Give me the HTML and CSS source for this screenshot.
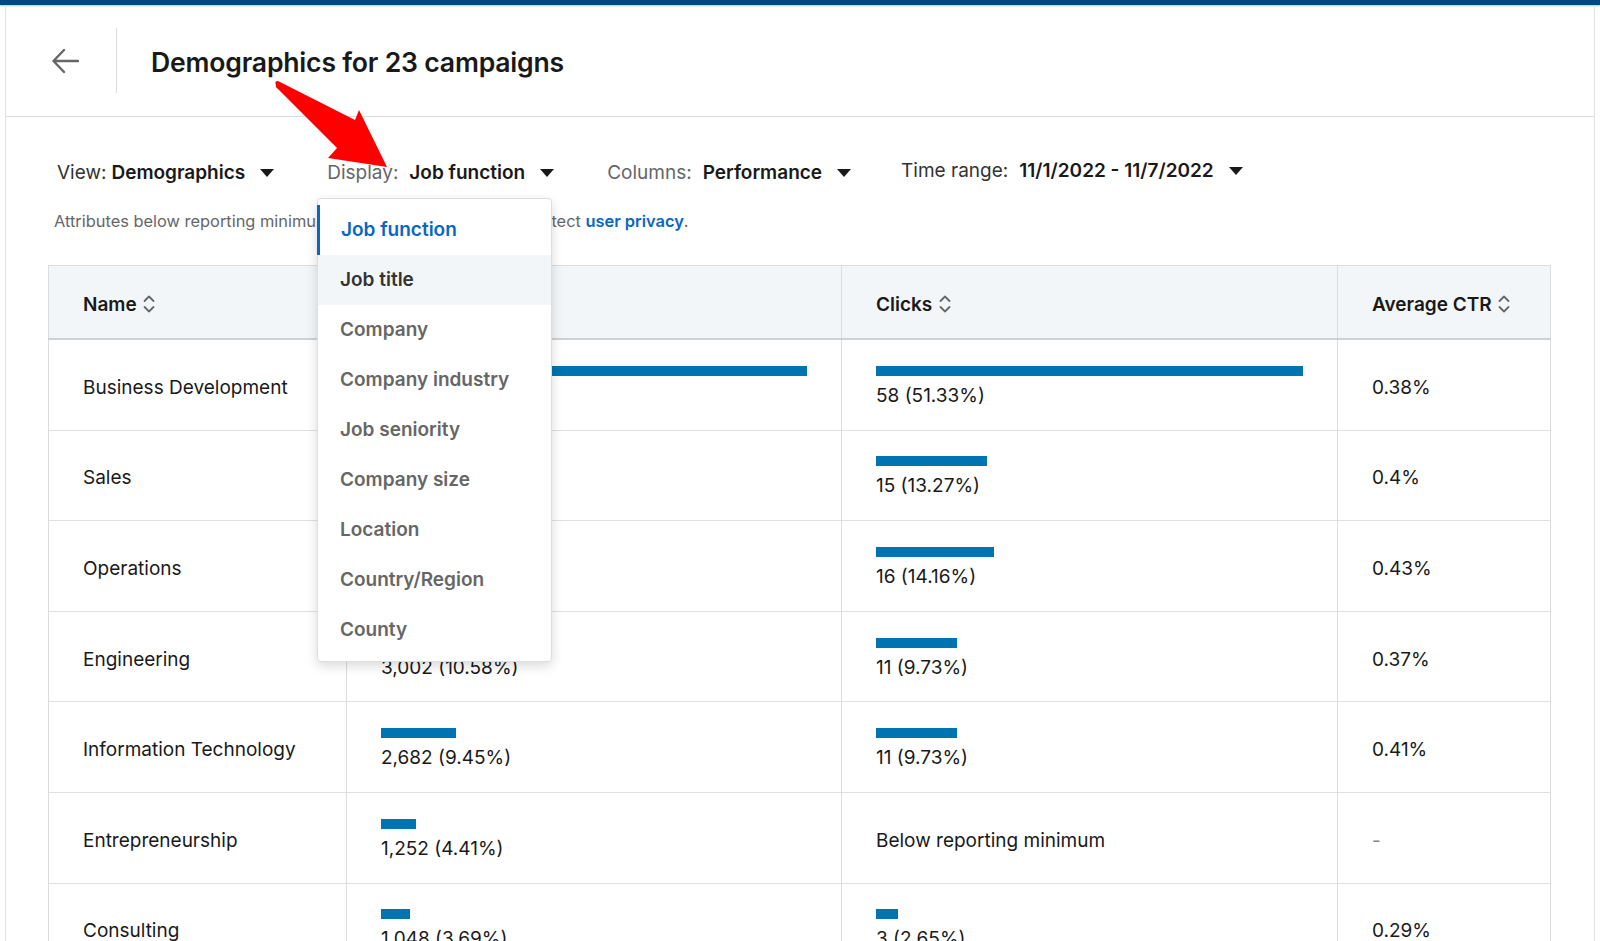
FILE: index.html
```html
<!DOCTYPE html>
<html lang="en">
<head>
  <meta charset="UTF-8">
  <meta name="viewport" content="width=device-width, initial-scale=1.0">
  <title>Demographics for 23 campaigns</title>
  <link rel="stylesheet" href="styles.css">
</head>
<body>
  <div class="topbar"></div>
  <div class="page">
    <!-- Header -->
    <header class="page-header">
      <button class="back-btn" aria-label="Back">
        <svg width="28" height="26" viewBox="0 0 28 26"><path d="M27 13 H3 M13 2 L2.5 13 L13 24" fill="none" stroke="#666" stroke-width="2.4" stroke-linecap="round" stroke-linejoin="round"/></svg>
      </button>
      <span class="divider"></span>
      <h1>Demographics for 23 campaigns</h1>
    </header>

    <!-- Filters -->
    <div class="controls">
      <div class="control"><span class="label dark">View:</span><span class="value">Demographics</span><span class="caret"></span></div>
      <div class="control"><span class="label">Display:</span><span class="value">Job function</span><span class="caret"></span></div>
      <div class="control"><span class="label">Columns:</span><span class="value">Performance</span><span class="caret"></span></div>
      <div class="control up"><span class="label dark">Time range:</span><span class="value">11/1/2022 - 11/7/2022</span><span class="caret"></span></div>
    </div>
    <p class="note">Attributes below reporting minimums will not be displayed to protect <a href="#">user privacy</a>.</p>

    <!-- Table -->
    <table class="demo-table">
      <colgroup>
        <col style="width: 298px">
        <col style="width: 495px">
        <col style="width: 496px">
        <col style="width: 213px">
      </colgroup>
      <thead>
        <tr>
          <th>Name <span class="sort"><svg width="14" height="20" viewBox="0 0 14 20"><path d="M2.5 7 L7 2.5 L11.5 7 M2.5 13 L7 17.5 L11.5 13" fill="none" stroke="#666" stroke-width="1.8" stroke-linecap="round" stroke-linejoin="round"/></svg></span></th>
          <th>Impressions <span class="sort"><svg width="14" height="20" viewBox="0 0 14 20"><path d="M2.5 7 L7 2.5 L11.5 7 M2.5 13 L7 17.5 L11.5 13" fill="none" stroke="#666" stroke-width="1.8" stroke-linecap="round" stroke-linejoin="round"/></svg></span></th>
          <th>Clicks <span class="sort"><svg width="14" height="20" viewBox="0 0 14 20"><path d="M2.5 7 L7 2.5 L11.5 7 M2.5 13 L7 17.5 L11.5 13" fill="none" stroke="#666" stroke-width="1.8" stroke-linecap="round" stroke-linejoin="round"/></svg></span></th>
          <th>Average CTR <span class="sort"><svg width="14" height="20" viewBox="0 0 14 20"><path d="M2.5 7 L7 2.5 L11.5 7 M2.5 13 L7 17.5 L11.5 13" fill="none" stroke="#666" stroke-width="1.8" stroke-linecap="round" stroke-linejoin="round"/></svg></span></th>
        </tr>
      </thead>
      <tbody>
        <tr>
          <td>Business Development</td>
          <td><div class="bar" style="width: 100%"></div><div class="num">15,263 (53.78%)</div></td>
          <td><div class="bar" style="width: 100%"></div><div class="num">58 (51.33%)</div></td>
          <td>0.38%</td>
        </tr>
        <tr>
          <td>Sales</td>
          <td><div class="bar" style="width: 24.6%"></div><div class="num">3,750 (13.21%)</div></td>
          <td><div class="bar" style="width: 25.9%"></div><div class="num">15 (13.27%)</div></td>
          <td>0.4%</td>
        </tr>
        <tr>
          <td>Operations</td>
          <td><div class="bar" style="width: 24.4%"></div><div class="num">3,721 (13.11%)</div></td>
          <td><div class="bar" style="width: 27.6%"></div><div class="num">16 (14.16%)</div></td>
          <td>0.43%</td>
        </tr>
        <tr>
          <td>Engineering</td>
          <td><div class="bar" style="width: 19.7%"></div><div class="num">3,002 (10.58%)</div></td>
          <td><div class="bar" style="width: 19%"></div><div class="num">11 (9.73%)</div></td>
          <td>0.37%</td>
        </tr>
        <tr>
          <td>Information Technology</td>
          <td><div class="bar" style="width: 17.6%"></div><div class="num">2,682 (9.45%)</div></td>
          <td><div class="bar" style="width: 19%"></div><div class="num">11 (9.73%)</div></td>
          <td>0.41%</td>
        </tr>
        <tr>
          <td>Entrepreneurship</td>
          <td><div class="bar" style="width: 8.2%"></div><div class="num">1,252 (4.41%)</div></td>
          <td>Below reporting minimum</td>
          <td class="muted">-</td>
        </tr>
        <tr>
          <td>Consulting</td>
          <td><div class="bar" style="width: 6.9%"></div><div class="num">1,048 (3.69%)</div></td>
          <td><div class="bar" style="width: 5.2%"></div><div class="num">3 (2.65%)</div></td>
          <td>0.29%</td>
        </tr>
      </tbody>
    </table>

    <!-- Open "Display" menu -->
    <ul class="dropdown">
      <li class="selected">Job function</li>
      <li class="hover">Job title</li>
      <li>Company</li>
      <li>Company industry</li>
      <li>Job seniority</li>
      <li>Company size</li>
      <li>Location</li>
      <li>Country/Region</li>
      <li>County</li>
    </ul>

    <!-- annotation arrow -->
    <svg class="callout" width="124" height="96" viewBox="0 0 124 96">
      <path d="M6 8 Q4 4 8 4 L85 43 L89 33 L117 90 L58 81 L67 71 L8 12 Q5 10 6 8 Z" fill="#ff0000"/>
    </svg>
  </div>
</body>
</html>
```

FILE: styles.css
```css
html, body {
  overflow: hidden;
}
body {
  margin: 0;
  font-family: Inter, "Noto Sans", sans-serif;
  color: #191919;
  background-color: #fff;
}
.topbar {
  height: 5px;
  background-color: #004b7c;
  box-shadow: 0 1px 2px rgba(0, 0, 0, 0.25);
}
.page {
  position: relative;
  margin: 0 5px;
  border-left: 1px solid #e3e3e3;
  border-right: 1px solid #e3e3e3;
  min-height: 960px;
}
.page-header {
  display: flex;
  align-items: center;
  height: 111px;
  border-bottom: 1px solid #dcdcdc;
  padding-left: 45px;
}
.back-btn {
  display: flex;
  padding: 0;
  border: none;
  background: none;
  cursor: pointer;
}
.divider {
  width: 1px;
  height: 65px;
  background-color: #dcdcdc;
  margin-left: 37px;
}
.page-header h1 {
  margin: 3px 0 0 34px;
  font-size: 26.6px;
  font-weight: 600;
  letter-spacing: -0.2px;
}
.controls {
  display: flex;
  align-items: center;
  padding: 42px 0 0 51px;
  height: 28px;
}
.control {
  display: flex;
  align-items: center;
  margin-right: 53px;
  font-size: 19px;
  line-height: 28px;
}
.control.up {
  margin-top: -4px;
  margin-left: -3px;
}
.control .label {
  color: #666;
  margin-right: 11px;
}
.control .label.dark {
  color: #333;
}
.control:first-child .label {
  margin-right: 5px;
}
.control .value {
  font-weight: 600;
}
.caret {
  width: 0;
  height: 0;
  margin-left: 15px;
  border-left: 7.5px solid transparent;
  border-right: 7.5px solid transparent;
  border-top: 8px solid #191919;
}
.note {
  margin: 24px 0 0 48px;
  font-size: 16.4px;
  line-height: 20px;
  color: #666;
}
.note a {
  color: #0a66c2;
  font-weight: 600;
  text-decoration: none;
}
.demo-table {
  margin: 34px 0 0 42px;
  width: 1502px;
  table-layout: fixed;
  border-collapse: collapse;
  border: 1px solid #dcdcdc;
  font-size: 19px;
}
.demo-table th {
  height: 64px;
  padding: 8px 34px 0;
  text-align: left;
  font-weight: 600;
  background-color: #f3f6f8;
  border-left: 1px solid #dcdcdc;
  border-bottom: 2px solid #d0d0d0;
}
.demo-table td {
  height: 84.6px;
  padding: 5px 34px 0;
  border-left: 1px solid #dcdcdc;
  border-top: 1px solid #e0e0e0;
  vertical-align: middle;
}
.sort {
  display: inline-block;
  vertical-align: -3px;
  margin-left: 1px;
}
.bar {
  height: 10px;
  background-color: #0073b1;
  margin: -1px 0 8px;
}
.num {
  line-height: 24px;
}
.muted {
  color: #888;
}
.dropdown {
  position: absolute;
  left: 311px;
  top: 193px;
  width: 233px;
  margin: 0;
  padding: 6px 0;
  list-style: none;
  background-color: #fff;
  border: 1px solid #dedede;
  border-radius: 4px;
  box-shadow: 0 4px 12px rgba(0, 0, 0, 0.15);
}
.dropdown li {
  height: 50px;
  line-height: 50px;
  padding-left: 22px;
  font-size: 19px;
  font-weight: 600;
  color: #666;
}
.dropdown li.selected {
  color: #0a66c2;
  border-left: 3px solid #0a66c2;
  padding-left: 21px;
  margin-left: -1px;
}
.dropdown li.hover {
  color: #333;
  background-color: #f3f6f8;
}
.callout {
  position: absolute;
  left: 264px;
  top: 72px;
}
```
